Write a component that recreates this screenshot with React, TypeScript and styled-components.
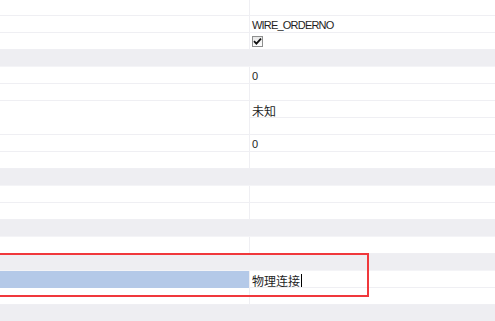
import React from "react";
import styled, { createGlobalStyle } from "styled-components";

const GlobalStyle = createGlobalStyle`
  html, body {
    margin: 0;
    padding: 0;
    background: #ffffff;
    overflow: hidden;
  }
  body {
    font-family: "Segoe UI", "Liberation Sans", "Noto Sans CJK SC", sans-serif;
  }
`;

const Grid = styled.div`
  position: relative;
  width: 495px;
  height: 321px;
  overflow: hidden;
`;

const Rows = styled.div`
  display: flex;
  flex-direction: column;
  margin-top: -1px;
`;

const CategoryRow = styled.div`
  height: 17px;
  box-sizing: border-box;
  background: #eeeef2;
  border-bottom: 1px solid #f4f4f7;
`;

const PropertyRow = styled.div`
  display: grid;
  grid-template-columns: 250px 1fr;
  height: 17px;
  box-sizing: border-box;
  border-bottom: 1px solid #efeff3;
`;

interface NameCellProps {
  selected?: boolean;
}

const NameCell = styled.div<NameCellProps>`
  background: ${(p) => (p.selected ? "#b4c9e8" : "#ffffff")};
  border-right: 1px solid #efeff3;
`;

const ValueCell = styled.div`
  display: flex;
  align-items: center;
  padding-left: 2px;
  padding-top: 1px;
  font-size: 11px;
  letter-spacing: -0.8px;
  color: #1e1e1e;
  white-space: nowrap;
`;

const CjkText = styled.span`
  font-family: "Noto Sans CJK SC", sans-serif;
  font-size: 12px;
  letter-spacing: 0;
  color: #1e1e1e;
`;

const Caret = styled.span`
  display: inline-block;
  width: 1px;
  height: 13px;
  margin-left: 1px;
  background: #000000;
`;

const CheckBox = styled.span`
  display: inline-flex;
  align-items: center;
  justify-content: center;
  width: 11px;
  height: 11px;
  margin-top: -1px;
  box-sizing: border-box;
  border: 1px solid #8e8f8f;
  background: linear-gradient(#e8e8e8, #ffffff);
`;

const Annotation = styled.div`
  position: absolute;
  left: -4px;
  top: 253px;
  width: 373px;
  height: 44px;
  box-sizing: border-box;
  border: 2px solid #f0383c;
  pointer-events: none;
`;

type Row =
  | { kind: "category" }
  | { kind: "prop"; value?: React.ReactNode; selected?: boolean };

const rows: Row[] = [
  { kind: "prop" },
  { kind: "prop", value: "WIRE_ORDERNO" },
  {
    kind: "prop",
    value: (
      <CheckBox>
        <svg width="9" height="9" viewBox="0 0 9 9">
          <path d="M1 4.2 L3.4 6.6 L8 1.6" fill="none" stroke="#111" strokeWidth="1.8" />
        </svg>
      </CheckBox>
    ),
  },
  { kind: "category" },
  { kind: "prop", value: "0" },
  { kind: "prop" },
  { kind: "prop", value: <CjkText>未知</CjkText> },
  { kind: "prop" },
  { kind: "prop", value: "0" },
  { kind: "prop" },
  { kind: "category" },
  { kind: "prop" },
  { kind: "prop" },
  { kind: "category" },
  { kind: "prop" },
  { kind: "category" },
  {
    kind: "prop",
    selected: true,
    value: (
      <>
        <CjkText>物理连接</CjkText>
        <Caret />
      </>
    ),
  },
  { kind: "prop" },
  { kind: "category" },
];

function App(): JSX.Element {
  return (
    <>
      <GlobalStyle />
      <Grid>
        <Rows>
          {rows.map((row, index) =>
            row.kind === "category" ? (
              <CategoryRow key={index} />
            ) : (
              <PropertyRow key={index}>
                <NameCell selected={row.selected} />
                <ValueCell>{row.value}</ValueCell>
              </PropertyRow>
            )
          )}
        </Rows>
        <Annotation />
      </Grid>
    </>
  );
}

export default App;
